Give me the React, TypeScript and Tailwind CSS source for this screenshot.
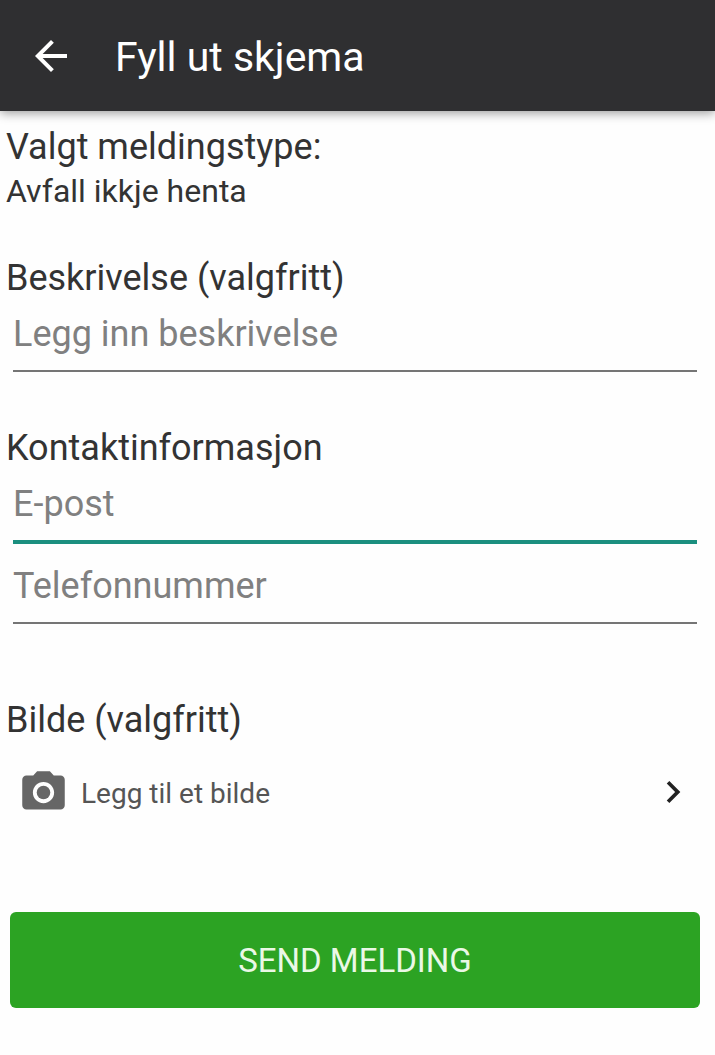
import React from "react";
import { MdArrowBack, MdCameraAlt, MdChevronRight } from "react-icons/md";

type FieldProps = {
  id: string;
  type: string;
  placeholder: string;
  active?: boolean;
};

const Field = ({ id, type, placeholder, active }: FieldProps) => {
  return (
    <input
      id={id}
      name={id}
      type={type}
      aria-label={placeholder}
      placeholder={placeholder}
      className={`block w-full bg-transparent pb-0.5 text-4xl leading-[68px] text-[#333333] outline-none placeholder:text-[#808080] placeholder:opacity-100 ${
        active
          ? "h-[74px] border-b-4 border-[#1b8f7f]"
          : "h-[72px] border-b-2 border-[#757575]"
      }`}
    />
  );
};

const Header = () => {
  return (
    <header className="relative flex h-[111px] items-center gap-10 bg-[#2f2f31] px-[27px] text-white shadow-[0_2px_10px_rgba(0,0,0,0.4)]">
      <button type="button" aria-label="Tilbake">
        <MdArrowBack className="size-12" />
      </button>
      <h1 className="pt-0.5 text-[41px] leading-12">Fyll ut skjema</h1>
    </header>
  );
};

const App = () => {
  return (
    <div className="min-h-screen bg-[#fefefe] font-[Roboto,sans-serif] text-[#333333]">
      <Header />
      <form
        className="pt-3.5 pb-12"
        onSubmit={(event) => event.preventDefault()}
      >
        <section className="px-1.5">
          <h2 className="text-4xl leading-11">Valgt meldingstype:</h2>
          <p className="text-[32px] leading-11">Avfall ikkje henta</p>
        </section>

        <section className="mt-[43px]">
          <label
            htmlFor="beskrivelse"
            className="block px-1.5 text-4xl leading-11"
          >
            Beskrivelse (valgfritt)
          </label>
          <div className="pr-[18px] pl-[13px]">
            <Field
              id="beskrivelse"
              type="text"
              placeholder="Legg inn beskrivelse"
            />
          </div>
        </section>

        <section className="mt-[54px]">
          <label htmlFor="epost" className="block px-1.5 text-4xl leading-11">
            Kontaktinformasjon
          </label>
          <div className="flex flex-col gap-2 pr-[18px] pl-[13px]">
            <Field id="epost" type="email" placeholder="E-post" active />
            <Field id="telefon" type="tel" placeholder="Telefonnummer" />
          </div>
        </section>

        <section className="mt-[74px]">
          <h2 className="px-1.5 text-4xl leading-11">Bilde (valgfritt)</h2>
          <button
            type="button"
            className="mt-[18px] flex h-16 w-full items-center gap-3 pr-5 pl-[18px] text-left"
          >
            <MdCameraAlt className="size-[51px] text-[#666666]" />
            <span className="flex-1 pt-1 text-[28px] leading-9 text-[#555555]">
              Legg til et bilde
            </span>
            <MdChevronRight className="size-11 text-[#222222]" />
          </button>
        </section>

        <div className="mt-[88px] pr-[15px] pl-2.5">
          <button
            type="submit"
            className="h-24 w-full rounded-md bg-[#2ca323] pt-0.5 text-[33px] text-[#eaf8e6] uppercase"
          >
            Send melding
          </button>
        </div>
      </form>
    </div>
  );
};

export default App;
